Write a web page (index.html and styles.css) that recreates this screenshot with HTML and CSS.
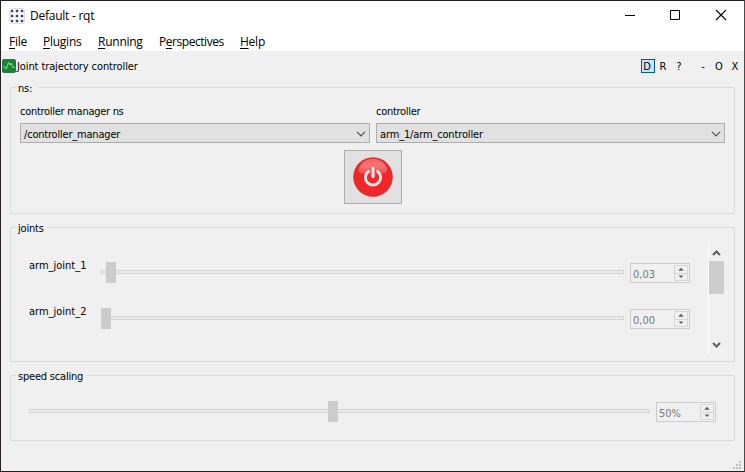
FILE: index.html
```html
<!DOCTYPE html>
<html lang="en">
<head>
<meta charset="utf-8">
<title>Default - rqt</title>
<link rel="stylesheet" href="styles.css">
</head>
<body>
<div class="window">
  <header class="titlebar">
    <svg class="app-icon" width="16" height="16" viewBox="0 0 16 16">
      <rect x=".5" y=".5" width="15" height="15" rx="2" fill="#f8f8fa" stroke="#dedee2"/>
      <path d="M3 3h.01M8 3h.01M13 3h.01M3 8h.01M8 8h.01M13 8h.01M3 13h.01M8 13h.01M13 13h.01" stroke="#35406e" stroke-width="2.7" stroke-linecap="round"/>
    </svg>
    <span class="title">Default - rqt</span>
    <div class="controls">
      <svg width="46" height="28" viewBox="0 0 46 28"><path d="M19 14.5h10" stroke="#000"/></svg>
      <svg width="46" height="28" viewBox="0 0 46 28"><path d="M18.5 9.5h9v9h-9z" fill="none" stroke="#000"/></svg>
      <svg width="46" height="28" viewBox="0 0 46 28"><path d="M18 9l10 10M28 9l-10 10" stroke="#000" stroke-width="1.1"/></svg>
    </div>
  </header>
  <nav class="menu">
    <span class="m-file"><u>F</u>ile</span>
    <span class="m-plugins"><u>P</u>lugins</span>
    <span class="m-running"><u>R</u>unning</span>
    <span class="m-persp">P<u>e</u>rspectives</span>
    <span class="m-help"><u>H</u>elp</span>
  </nav>
  <main>
    <div class="dock">
      <svg width="14" height="14" viewBox="0 0 14 14">
        <rect x=".5" y=".5" width="13" height="13" rx="1.5" fill="#168634" stroke="#31704a"/>
        <path d="M1 8h2l1.3 2L6.5 3.5 8 6l1-2 1.5 4 2.5.5" fill="none" stroke="#8bdd83"/>
      </svg>
      <span class="dock-title">Joint trajectory controller</span>
      <div class="dock-buttons"><b class="on">D</b><b>R</b><b>?</b><b class="gap">-</b><b>O</b><b>X</b></div>
    </div>

    <section class="group ns">
      <h2 class="legend">ns:</h2>
      <div class="fields">
        <div class="field"><label>controller manager ns</label>
          <div class="combo"><span>/controller_manager</span><svg width="10" height="6" viewBox="0 0 10 6"><path d="M1 .8l4 4 4-4" fill="none" stroke="#505050" stroke-width="1.2"/></svg></div>
        </div>
        <div class="field"><label>controller</label>
          <div class="combo"><span class="wide">arm_1/arm_controller</span><svg width="10" height="6" viewBox="0 0 10 6"><path d="M1 .8l4 4 4-4" fill="none" stroke="#505050" stroke-width="1.2"/></svg></div>
        </div>
      </div>
      <div class="power">
        <svg width="40" height="40" viewBox="0 0 40 40">
          <defs>
            <linearGradient id="gloss" x1="0" y1="0" x2="0" y2="1"><stop offset="0" stop-color="#fff" stop-opacity=".28"/><stop offset=".5" stop-color="#fff" stop-opacity=".36"/><stop offset="1" stop-color="#fff" stop-opacity=".12"/></linearGradient>
            <radialGradient id="red"><stop offset=".8" stop-color="#f02628"/><stop offset="1" stop-color="#dc3034"/></radialGradient>
          </defs>
          <circle cx="20" cy="20" r="19.8" fill="url(#red)"/>
          <path d="M5.6 13C7.5 6 13 1.8 20 1.8S32.5 6 34.4 13C34 17 27 17.5 20 17.5S6 17 5.6 13z" fill="url(#gloss)"/>
          <path d="M15.4 14.4a7.6 7.6 0 1 0 9.2 0" fill="none" stroke="#f3e7e5" stroke-width="3" stroke-linecap="round"/>
          <path d="M20 11.3v8.4" stroke="#ef4a4a" stroke-width="5.6"/>
          <path d="M20 11.3v8.4" stroke="#f3e7e5" stroke-width="3" stroke-linecap="round"/>
        </svg>
      </div>
    </section>

    <section class="group joints">
      <h2 class="legend">joints</h2>
      <div class="joint-list">
        <div class="joint"><label>arm_joint_1</label><div class="slider"><i></i></div>
          <div class="spin"><span>0,03</span><div class="steps"><svg width="12" height="7" viewBox="0 0 12 7"><path d="M6 1.7L8.8 4.8H3.2z"/></svg><svg width="12" height="7" viewBox="0 0 12 7"><path d="M6 4.8L8.8 1.7H3.2z"/></svg></div></div>
        </div>
        <div class="joint"><label>arm_joint_2</label><div class="slider zero"><i></i></div>
          <div class="spin"><span>0,00</span><div class="steps"><svg width="12" height="7" viewBox="0 0 12 7"><path d="M6 1.7L8.8 4.8H3.2z"/></svg><svg width="12" height="7" viewBox="0 0 12 7"><path d="M6 4.8L8.8 1.7H3.2z"/></svg></div></div>
        </div>
      </div>
      <div class="scrollbar">
        <svg width="15" height="17" viewBox="0 0 15 17"><path d="M4 11l3.5-3.5L11 11" fill="none" stroke="#5c5c5c" stroke-width="2"/></svg>
        <div class="thumb"></div>
        <svg class="down" width="15" height="17" viewBox="0 0 15 17"><path d="M4 7l3.5 3.5L11 7" fill="none" stroke="#5c5c5c" stroke-width="2"/></svg>
      </div>
    </section>

    <section class="group speed">
      <h2 class="legend">speed scaling</h2>
      <div class="speed-row"><div class="slider half"><i></i></div>
        <div class="spin"><span>50%</span><div class="steps"><svg width="12" height="7" viewBox="0 0 12 7"><path d="M6 1.7L8.8 4.8H3.2z"/></svg><svg width="12" height="7" viewBox="0 0 12 7"><path d="M6 4.8L8.8 1.7H3.2z"/></svg></div></div>
      </div>
    </section>
    <svg class="grip" width="8" height="8" viewBox="0 0 8 8"><path d="M6 0h2v2H6zM3 3h2v2H3zM6 3h2v2H6zM0 6h2v2H0zM3 6h2v2H3zM6 6h2v2H6z" fill="#bfbfbf"/></svg>
  </main>
</div>
</body>
</html>
```

FILE: styles.css
```css
*, *::before { box-sizing: border-box; }
body { margin: 0; overflow: hidden; font: 11px/14px "DejaVu Sans Condensed", "DejaVu Sans", sans-serif; font-stretch: condensed; color: #000; }
svg { display: block; flex: none; }
.window { width: 745px; height: 472px; border: 1px solid #231f20; border-right-color: #4a4a4a; background: #f0f0f0; display: flex; flex-direction: column; }
.titlebar { height: 28px; flex: none; background: #fff; display: flex; align-items: center; padding-left: 8px; }
.app-icon { margin-top: 1px; }
.title { margin: 2px 0 0 5px; font: 12px/16px "Open Sans", sans-serif; letter-spacing: -.25px; }
.controls { display: flex; margin-left: auto; }
.menu { height: 22px; flex: none; background: #fff; display: flex; align-items: center; padding: 3px 0 0 8px; font: 12px/16px "Open Sans", sans-serif; letter-spacing: -.25px; white-space: nowrap; }
.menu u { text-underline-offset: 1.5px; text-decoration-thickness: 1px; }
.m-file { width: 34px; }
.m-plugins { width: 55px; }
.m-running { width: 61px; }
.m-persp { width: 81px; letter-spacing: -.45px; }
main { flex: 1; position: relative; display: flex; flex-direction: column; padding: 0 9px; }
.dock { height: 31px; flex: none; margin: 0 -9px; padding: 0 2px 0 1px; display: flex; align-items: center; }
.dock svg { margin-bottom: 2px; }
.dock-title { margin-left: 1px; letter-spacing: -.1px; }
.dock-buttons { margin: 0 0 1px auto; display: flex; }
.dock-buttons b { width: 14px; height: 14px; margin-left: 2px; font-weight: normal; line-height: 16px; text-align: center; }
.dock-buttons .on { padding-right: 2px; line-height: 14px; border: 1px solid #00559b; background: #cce4f7; }
.dock-buttons .on + b { margin-left: 1px; }
.dock-buttons .gap { margin-left: 10px; }
.group { width: 725px; flex: none; border: 1px solid #dcdcdc; margin: 0; display: flex; }
.legend { position: absolute; margin: -6px 0 0 6px; padding: 0 3px 0 1px; font-size: 11px; line-height: 14px; font-weight: normal; background: #f0f0f0; letter-spacing: -.2px; }
.ns { margin-top: 5px; height: 127px; flex-direction: column; padding: 16px 9px 0; }
.ns .legend { margin-left: -3px; margin-top: -22px; padding-right: 6px; }
.fields { display: grid; grid-template-columns: 350px 349px; gap: 6px; }
.field label { display: block; height: 19px; padding-top: 1px; letter-spacing: -.28px; }
.combo { height: 20px; border: 1px solid #adadad; background: #e1e1e1; display: flex; align-items: center; justify-content: space-between; padding: 0 3px; letter-spacing: -.2px; }
.combo span { padding-top: 3px; }
.combo svg { margin-top: 2px; }
.combo .wide { letter-spacing: -.15px; }
.power { width: 58px; height: 54px; margin: 7px 0 0 324px; border: 1px solid #adadad; background: #e1e1e1; display: grid; place-items: center; }
.joints { margin-top: 13px; height: 135px; }
.joint-list { margin: 23px 18px 0 18px; width: 661px; }
.joint { height: 46px; display: flex; padding-top: 11px; }
.joint label { width: 72px; margin-top: -3px; letter-spacing: 0; }
.slider { width: 523px; height: 21px; padding-top: 8px; }
.slider::before { content: ""; display: block; height: 4px; border: 1px solid #d6d6d6; background: #e7eaea; }
.slider i { display: block; width: 10px; height: 21px; margin: -12px 0 0 5px; background: #ccc; position: relative; }
.slider.zero i { margin-left: 0; }
.slider.half { width: 621px; }
.slider.half i { margin-left: 299px; }
.spin { width: 60px; height: 20px; margin: 1px 0 0 6px; border: 1px solid #ccc; padding: 1px; display: flex; justify-content: space-between; color: #787878; line-height: 19px; }
.spin span { padding-left: 1px; }
.steps { width: 14px; height: 16px; border: 1px solid #d6d6d6; display: grid; }
.steps svg { fill: #606060; }
.steps svg + svg { border-top: 1px solid #d6d6d6; }
.scrollbar { width: 16px; height: 109px; margin: 16px 0 0; border-left: 1px solid #fff; display: flex; flex-direction: column; }
.thumb { height: 33px; background: #cdcdcd; }
.down { margin-top: auto; }
.speed { margin-top: 13px; height: 66px; }
.speed-row { display: flex; margin: 25px 0 0 18px; }
.grip { position: absolute; right: 3px; bottom: 2px; }
```
